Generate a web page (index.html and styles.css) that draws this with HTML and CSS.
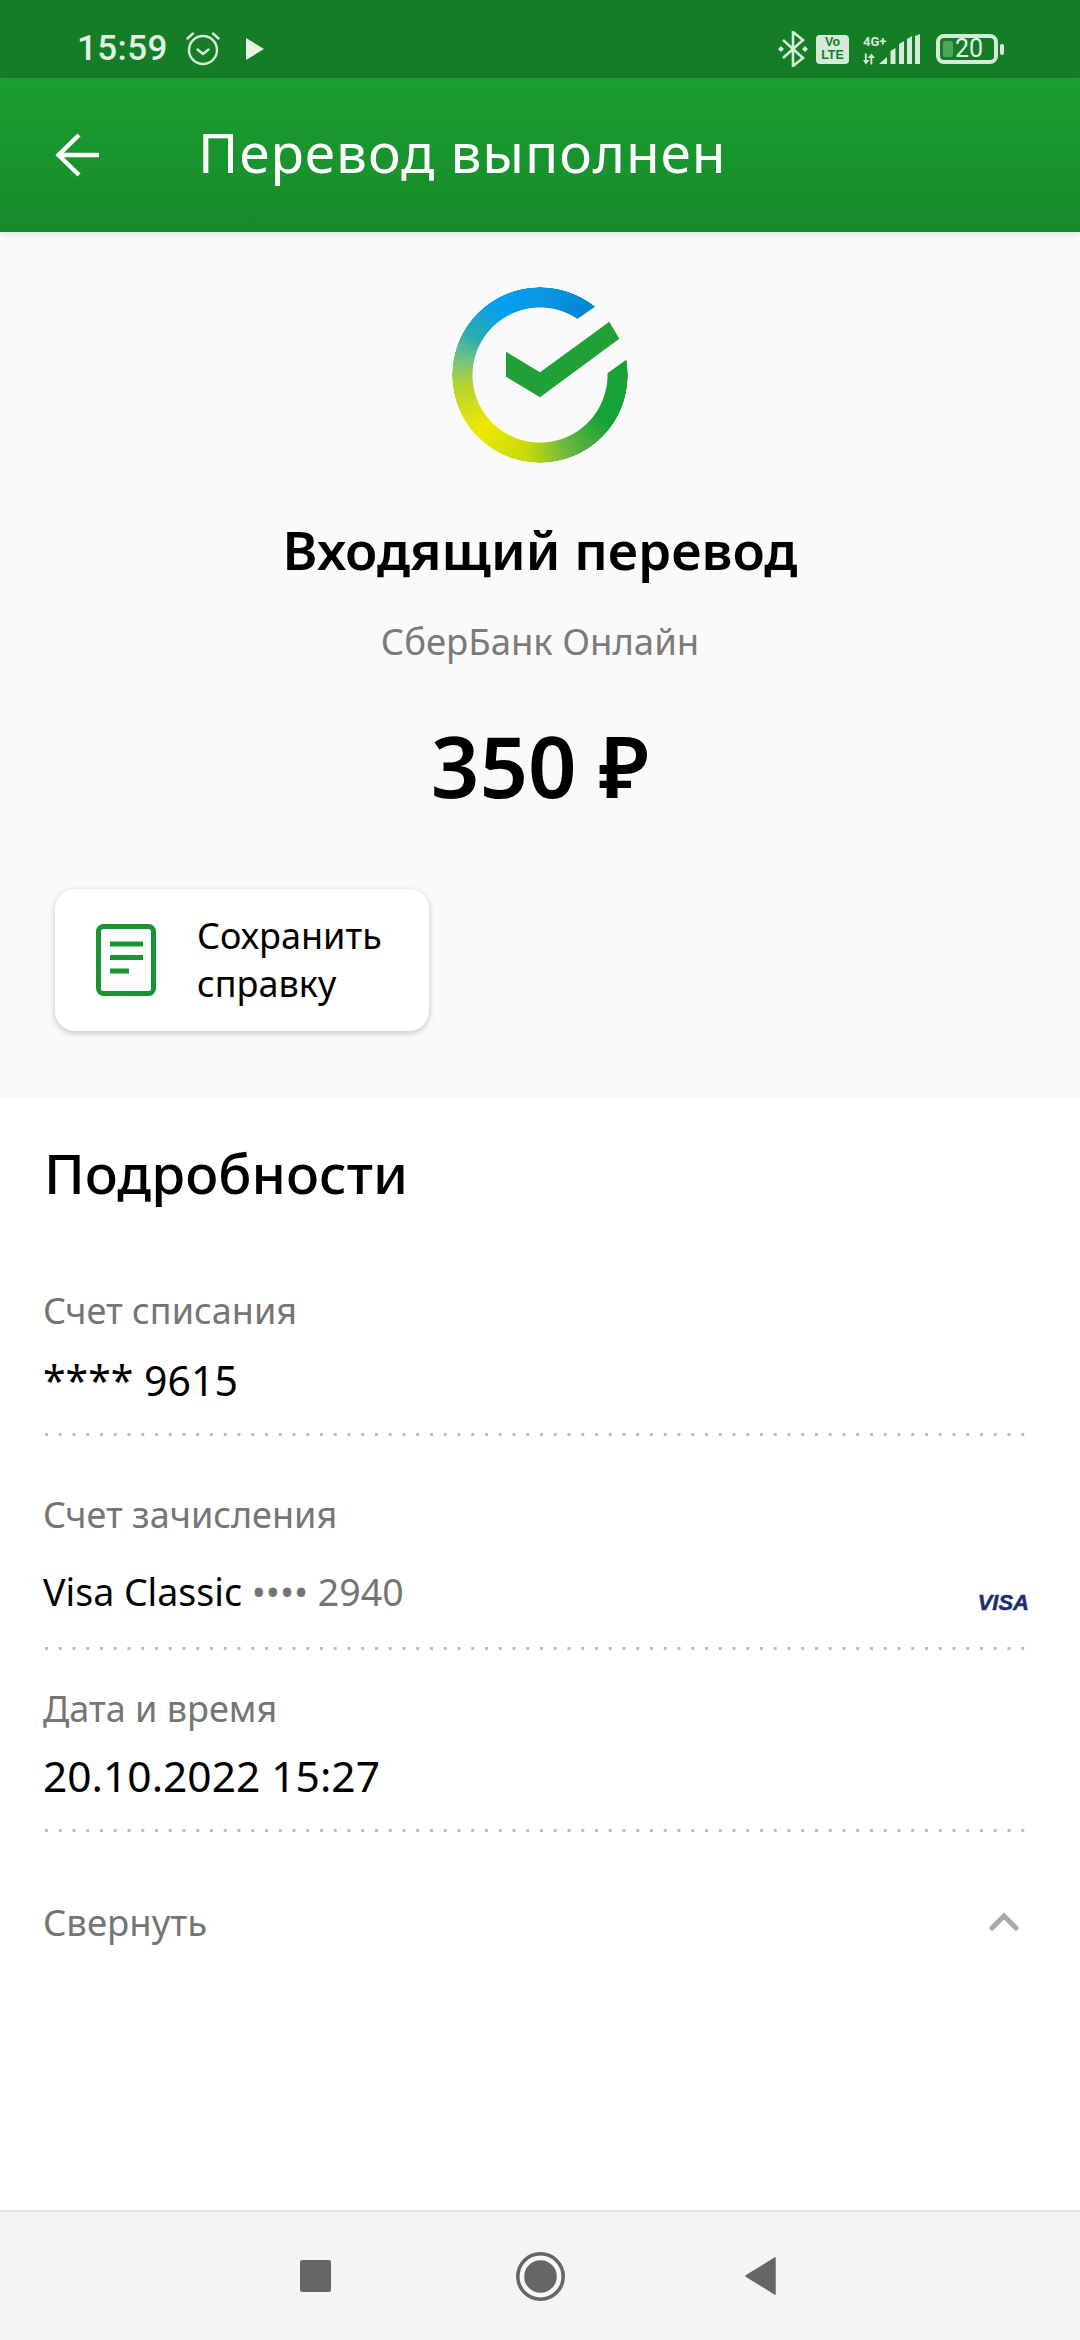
FILE: index.html
```html
<!DOCTYPE html>
<html lang="ru">
<head>
<meta charset="utf-8">
<title>Перевод выполнен</title>
<link rel="stylesheet" href="styles.css">
</head>
<body>
<div class="page">
  <header class="status">
    <div class="status-left">
      <span class="time">15:59</span>
      <svg class="ic-alarm" viewBox="0 0 36 36" fill="none" stroke="#d5ead8" stroke-width="2.4" stroke-linecap="round" stroke-linejoin="round"><circle cx="18" cy="20" r="14"/><path d="M12.5 19.5l5.5 4.5 5.5-4.5"/><path d="M2.5 8.5L8 3.5M33.5 8.5L28 3.5"/></svg>
      <svg class="ic-play" viewBox="0 0 18 22"><path d="M0 0L18 11 0 22z" fill="#e6f3e8"/></svg>
    </div>
    <div class="status-right">
      <svg class="ic-bt" viewBox="0 0 30 36" fill="none" stroke="#d5ead8" stroke-width="2.6"><path d="M5 9l20 18-10 8V1l10 8L5 27"/><path d="M0 18l3-3 3 3-3 3zM24 18l3-3 3 3-3 3z" fill="#d5ead8" stroke="none"/></svg>
      <span class="volte"><span>Vo</span><span>LTE</span></span>
      <span class="net">
        <span class="net-label">4G+</span>
        <svg class="ic-arrows" viewBox="0 0 14 12" fill="#d5ead8"><path d="M2 0h2v7h3L3 12 0 7h2zM10 12H8V5H5l4-5 4 5h-3z"/></svg>
      </span>
      <svg class="ic-signal" viewBox="0 0 41 30" fill="#d5ead8"><path d="M0 30l8-7v7zM11.500 30V17l5-3v16zM20 30V10l5-3v23zM28 30V5l5-3v28zM36 30V2l5-2v30z"/></svg>
      <span class="battery"><span class="battery-body"><span class="battery-fill"></span><span class="battery-num">20</span></span><span class="battery-nub"></span></span>
    </div>
  </header>

  <div class="appbar">
    <svg class="ic-back" viewBox="0 0 44 44" fill="none" stroke="#fff" stroke-width="4.4"><path d="M44 22H4M24 2L3.5 22 24 42"/></svg>
    <h1 class="appbar-title">Перевод выполнен</h1>
  </div>

  <section class="summary">
    <div class="logo">
      <div class="logo-ring"></div>
      <svg class="logo-check" viewBox="0 0 176 176"><path d="M54 64.7L88 85.3 157.3 34.7 167.3 51.7 88 110.3 54 89.7z" fill="#21a038"/></svg>
    </div>
    <h2 class="sum-title">Входящий перевод</h2>
    <p class="sum-sub">СберБанк Онлайн</p>
    <p class="sum-amount">350 ₽</p>
    <div class="save-card">
      <svg class="ic-doc" viewBox="0 0 60 72" fill="none" stroke="#1a9433"><rect x="2.500" y="2.500" width="55" height="67" rx="5" stroke-width="5"/><path d="M14 20h33M14 33.500h33M14 47h19" stroke-width="5"/></svg>
      <span class="save-text">Сохранить<br>справку</span>
    </div>
  </section>

  <section class="details">
    <h2 class="details-title">Подробности</h2>
    <div class="field field-first">
      <div class="label">Счет списания</div>
      <div class="value">**** 9615</div>
    </div>
    <div class="field field-card">
      <div class="label">Счет зачисления</div>
      <div class="value-card">
        <span class="card-name">Visa Classic <span class="card-mask"><span class="dots">••••</span> 2940</span></span>
        <span class="visa">VISA</span>
      </div>
    </div>
    <div class="field field-date">
      <div class="label">Дата и время</div>
      <div class="value value-date">20.10.2022 15:27</div>
    </div>
    <div class="collapse">
      <span>Свернуть</span>
      <svg class="ic-chev" viewBox="0 0 30 20" fill="none" stroke="#aaa" stroke-width="5" stroke-linecap="round"><path d="M3 16L15 4l12 12"/></svg>
    </div>
  </section>

  <nav class="navbar">
    <span class="nav-square"></span>
    <svg class="nav-home" viewBox="0 0 49 49"><circle cx="24.500" cy="24.500" r="22.700" fill="#f9f9f9" stroke="#666" stroke-width="3.600"/><circle cx="24.500" cy="24.500" r="16.300" fill="#666"/></svg>
    <svg class="nav-back" viewBox="0 0 31 38"><path d="M30 1L1 19 30 37z" fill="#666" stroke="#666" stroke-width="1.500" stroke-linejoin="round"/></svg>
  </nav>
</div>
</body>
</html>
```
FILE: styles.css
```css
* { box-sizing: border-box; }
html, body { margin: 0; padding: 0; }
body { width: 1080px; height: 2340px; font-family: "Noto Sans", "Open Sans", sans-serif; color: #000; background: #fff; overflow: hidden; }
h1, h2, p { margin: 0; font-weight: normal; }
.page { display: flex; flex-direction: column; height: 2340px; }

.status { height: 78px; flex: none; background: #147d25; display: flex; justify-content: space-between; align-items: center; padding: 20px 76px 0 77px; }
.status-left { display: flex; align-items: center; }
.time { font-family: Roboto, sans-serif; font-weight: 500; font-size: 35px; line-height: 40px; color: #dff0e2; letter-spacing: .4px; }
.ic-alarm { width: 36px; height: 36px; margin-left: 17px; margin-top: -2px; }
.ic-play { width: 18px; height: 22px; margin-left: 25px; }
.status-right { display: flex; align-items: center; }
.ic-bt { width: 30px; height: 36px; }
.volte { width: 33px; height: 29px; margin-left: 8px; border-radius: 4px; background: #d5ead8; color: #147d25; display: flex; flex-direction: column; align-items: center; font: 700 12.500px/13px "Liberation Sans", sans-serif; padding-top: 1px; }
.net { display: flex; flex-direction: column; margin-left: 14px; width: 28px; align-items: flex-start; }
.net-label { font: 700 13px/15px Roboto, sans-serif; color: #d5ead8; }
.ic-arrows { width: 13px; height: 12px; margin-top: 4px; }
.ic-signal { width: 41px; height: 30px; margin-left: -12px; flex: none; }
.battery { display: flex; align-items: center; margin-left: 16px; }
.battery-body { width: 62px; height: 30px; border: 4px solid #d5ead8; border-radius: 8px; display: flex; align-items: center; }
.battery-fill { width: 10px; height: 16px; margin-left: 3px; border-radius: 2px; background: #4fa55e; }
.battery-num { font: 400 25px/26px Roboto, sans-serif; color: #e6f3e8; margin-left: 2px; }
.battery-nub { width: 4px; height: 11px; margin-left: 2px; border-radius: 2px; background: #d5ead8; }

.appbar { height: 154px; flex: none; background: linear-gradient(#1a9f30, #178a2b); display: flex; align-items: center; padding-left: 55px; box-shadow: 0 2px 6px rgba(0,0,0,.1); position: relative; }
.ic-back { width: 44px; height: 44px; }
.appbar-title { margin-left: 99px; font-size: 55px; line-height: 76px; color: #fff; letter-spacing: .9px; position: relative; top: -3px; }

.summary { height: 866px; flex: none; background: #fafafa; display: flex; flex-direction: column; align-items: center; padding-top: 55px; }
.logo { position: relative; width: 176px; height: 176px; flex: none; }
.logo-ring { width: 176px; height: 176px; border-radius: 50%;
  background: conic-gradient(#0a97e4 0deg, #0085cf 40deg, #0085cf 60deg, #1ba136 80deg, #14a336 125deg, #6cb73d 160deg, #c8da0d 190deg, #f0e800 228deg, #b6d430 262deg, #78c47e 280deg, #2aacb0 300deg, #00a0f0 330deg, #0a97e4 360deg);
  -webkit-mask: radial-gradient(circle, transparent 67px, #000 68px, #000 87.500px, transparent 88px);
  mask: radial-gradient(circle, transparent 67px, #000 68px, #000 87.500px, transparent 88px);
  clip-path: polygon(0 0, 171.500px 0, 105px 46px, 135px 101px, 176px 71.500px, 176px 176px, 0 176px);
}
.logo-check { position: absolute; left: 0; top: 0; width: 176px; height: 176px; }
.sum-title { margin-top: 51px; font-size: 53px; line-height: 72px; font-weight: 600; }
.sum-sub { margin-top: 31px; font-size: 36.500px; line-height: 48px; color: #7b7b7b; }
.sum-amount { margin-top: 42px; font-size: 85px; line-height: 116px; font-weight: 600; }
.save-card { align-self: flex-start; margin: 66px 0 0 55px; width: 374px; height: 142px; flex: none; background: #fff; border-radius: 20px; box-shadow: 0 2px 6px rgba(0,0,0,.22); display: flex; align-items: center; padding-left: 41px; }
.ic-doc { width: 60px; height: 72px; flex: none; }
.save-text { margin-left: 41px; font-size: 36px; line-height: 48px; }

.details { flex: 1; padding: 0 44px; display: flex; flex-direction: column; }
.details-title { margin-top: 37px; font-size: 55px; line-height: 76px; font-weight: 500; }
.field { background-image: linear-gradient(90deg, #bdbdbd 3px, transparent 3px); background-size: 13.750px 3px; background-repeat: repeat-x; background-position: 1px bottom; margin-right: 10px; }
.field-first { margin-top: 76px; height: 149px; }
.field-card { margin-top: 55px; height: 159px; }
.field-date { margin-top: 35px; height: 147px; }
.label { font-size: 36px; line-height: 48px; color: #757575; margin-left: -1px; }
.value { font-size: 41px; line-height: 56px; margin-top: 17px; margin-left: -1px; }
.value-date { font-size: 42.500px; line-height: 58px; margin-top: 14px; }
.value-card { font-size: 37.500px; line-height: 50px; margin-top: 28px; margin-left: -1px; display: flex; justify-content: space-between; }
.card-mask { color: #757575; }
.visa { font: italic 700 22px/22px "Liberation Sans", sans-serif; color: #1a2e6c; -webkit-text-stroke: .5px #1a2e6c; align-self: flex-end; margin-right: -3px; margin-bottom: 3px; }
.collapse { margin-top: 66px; margin-right: 17px; margin-left: -1px; display: flex; justify-content: space-between; align-items: center; font-size: 36.500px; line-height: 48px; color: #757575; }
.ic-chev { width: 30px; height: 20px; }

.navbar { height: 130px; flex: none; background: #f4f4f4; border-top: 2px solid #e0e0e0; display: flex; align-items: center; padding: 0 304px 0 300px; justify-content: space-between; }
.nav-square { width: 31px; height: 32px; background: #666; border-radius: 2px; }
.nav-home { width: 49px; height: 49px; margin-left: 5px; }
.nav-back { width: 31px; height: 38px; }
```
